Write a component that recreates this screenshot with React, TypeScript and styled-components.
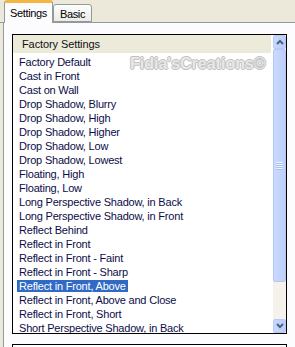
import React from "react";
import styled, { createGlobalStyle } from "styled-components";

const Global = createGlobalStyle`
  html, body { margin: 0; padding: 0; }
  body { background: #ece9da; font-family: "Liberation Sans", Arial, sans-serif; }
`;

const Root = styled.div`
  width: 295px;
  height: 347px;
  overflow: hidden;
  background: #ece9da;
  display: flex;
  flex-direction: column;
`;

const TabStrip = styled.div`
  height: 23px;
  display: flex;
  align-items: flex-end;
  padding-left: 4px;
  border-bottom: 1px solid #919b9c;
  box-sizing: border-box;
`;

const Tab = styled.div<{ $active?: boolean }>`
  box-sizing: border-box;
  height: ${(p) => (p.$active ? "23px" : "18px")};
  margin-bottom: ${(p) => (p.$active ? "-1px" : "0")};
  padding: 0 ${(p) => (p.$active ? "5px" : "6px")};
  padding-top: ${(p) => (p.$active ? "0" : "1px")};
  display: flex;
  align-items: center;
  font-family: "Liberation Sans", Arial, sans-serif;
  font-size: 11px;
  letter-spacing: -0.35px;
  color: #000;
  border: 1px solid #919b9c;
  border-bottom: ${(p) => (p.$active ? "none" : "1px solid #919b9c")};
  border-top: ${(p) => (p.$active ? "3px solid #f5b644" : "1px solid #919b9c")};
  border-radius: 3px 3px 0 0;
  background: ${(p) => (p.$active ? "#fcfcfe" : "linear-gradient(#fefefe, #ecebe6)")};
`;

const Page = styled.div`
  flex: 1;
  margin-left: 3px;
  border-left: 1px solid #919b9c;
  background: #fcfcfe;
  padding: 11px 0 0 8px;
  display: flex;
  flex-direction: column;
  gap: 10px;
`;

const ListBox = styled.div`
  position: relative;
  width: 275px;
  height: 300px;
  flex: none;
  box-sizing: border-box;
  border: 1px solid #000;
  background: #fff;
  display: grid;
  grid-template-columns: 1fr 14px;
  overflow: hidden;
`;

const ListCol = styled.div`
  display: flex;
  flex-direction: column;
  overflow: hidden;
`;

const Header = styled.div`
  height: 18px;
  flex: none;
  background: #ecead9;
  display: flex;
  align-items: center;
  padding-left: 9px;
  margin-right: 1px;
  font-family: "Liberation Sans", Arial, sans-serif;
  font-size: 11px;
  letter-spacing: -0.1px;
  color: #101010;
`;

const Items = styled.div`
  padding-top: 2px;
  display: flex;
  flex-direction: column;
`;

const Item = styled.div`
  height: 14px;
  flex: none;
  display: flex;
  align-items: center;
  padding-left: 4px;
  font-family: "Liberation Sans", Arial, sans-serif;
  font-size: 11px;
  letter-spacing: -0.2px;
  color: #0c0c48;
  white-space: nowrap;
`;

const ItemText = styled.span<{ $sel?: boolean }>`
  padding: 0 2px;
  line-height: 12px;
  height: 12px;
  background: ${(p) => (p.$sel ? "#316ac5" : "transparent")};
  color: ${(p) => (p.$sel ? "#fff" : "inherit")};
`;

const Watermark = styled.div`
  position: absolute;
  left: 117px;
  top: 20px;
  font-family: "Liberation Sans", Arial, sans-serif;
  font-weight: bold;
  font-size: 16px;
  color: #e8e8e8;
  text-shadow: 1px 0 0 #c0c0c0, -1px 0 0 #c0c0c0, 0 1px 0 #c0c0c0, 0 -1px 0 #c0c0c0;
  pointer-events: none;
`;

const ScrollBar = styled.div`
  display: flex;
  flex-direction: column;
  background: #f4f2ea;
  border-left: 1px solid #fff;
`;

const ArrowBtn = styled.div`
  height: 14px;
  flex: none;
  box-sizing: border-box;
  border: 1px solid #b7cbf5;
  border-radius: 2px;
  background: linear-gradient(90deg, #c9d8fc, #b8cdfa);
  display: flex;
  align-items: center;
  justify-content: center;
`;

const Thumb = styled.div`
  height: 233px;
  flex: none;
  box-sizing: border-box;
  border: 1px solid #b3c6f4;
  border-radius: 2px;
  background: linear-gradient(90deg, #cbd9fd, #bdd0fb);
  display: flex;
  align-items: center;
  justify-content: center;
`;

const Track = styled.div`
  flex: 1;
`;

const Grip = styled.div`
  width: 7px;
  display: flex;
  flex-direction: column;
  gap: 1px;
`;

const GripLine = styled.div`
  height: 1px;
  background: #eef3fe;
  box-shadow: 0 1px 0 #a9bff0;
`;

const LowerBox = styled.div`
  width: 275px;
  height: 20px;
  flex: none;
  box-sizing: border-box;
  border: 1px solid #000;
  background: #fff;
`;

const items = [
  "Factory Default",
  "Cast in Front",
  "Cast on Wall",
  "Drop Shadow, Blurry",
  "Drop Shadow, High",
  "Drop Shadow, Higher",
  "Drop Shadow, Low",
  "Drop Shadow, Lowest",
  "Floating, High",
  "Floating, Low",
  "Long Perspective Shadow, in Back",
  "Long Perspective Shadow, in Front",
  "Reflect Behind",
  "Reflect in Front",
  "Reflect in Front - Faint",
  "Reflect in Front - Sharp",
  "Reflect in Front, Above",
  "Reflect in Front, Above and Close",
  "Reflect in Front, Short",
  "Short Perspective Shadow, in Back",
];

const Chevron = ({ up }: { up?: boolean }) => (
  <svg width="8" height="6" viewBox="0 0 8 6">
    <path
      d={up ? "M1 5 L4 2 L7 5" : "M1 1 L4 4 L7 1"}
      fill="none"
      stroke="#4d6185"
      strokeWidth="2"
    />
  </svg>
);

export default function App() {
  return (
    <Root>
      <Global />
      <TabStrip>
        <Tab $active>Settings</Tab>
        <Tab>Basic</Tab>
      </TabStrip>
      <Page>
        <ListBox>
          <ListCol>
            <Header>Factory Settings</Header>
            <Items>
              {items.map((t) => (
                <Item key={t}>
                  <ItemText $sel={t === "Reflect in Front, Above"}>{t}</ItemText>
                </Item>
              ))}
            </Items>
          </ListCol>
          <ScrollBar>
            <ArrowBtn>
              <Chevron up />
            </ArrowBtn>
            <Thumb>
              <Grip>
                <GripLine />
                <GripLine />
                <GripLine />
                <GripLine />
              </Grip>
            </Thumb>
            <Track />
            <ArrowBtn>
              <Chevron />
            </ArrowBtn>
          </ScrollBar>
          <Watermark>Fidia'sCreations©</Watermark>
        </ListBox>
        <LowerBox />
      </Page>
    </Root>
  );
}
